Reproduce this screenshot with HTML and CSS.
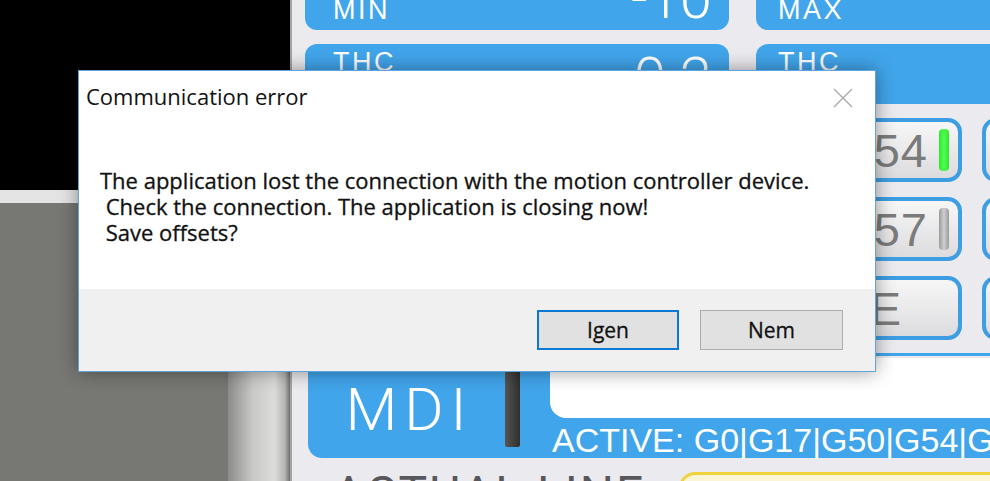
FILE: index.html
```html
<!doctype html>
<html>
  <head>
    <meta charset="utf-8">
    <title>Communication error</title>
    <link rel="stylesheet" href="styles.css">
  </head>
  <body>
    <div class="screen">
      <div class="left">
        <div class="video"></div>
        <div class="strip"></div>
        <div class="lower">
          <div class="grey"></div>
          <div class="slider"></div>
        </div>
      </div>
      <div class="panel">
        <div class="row first">
          <div class="box">
            <span class="label">MIN</span>
            <span class="value">-10</span>
          </div>
          <div class="box wide">
            <span class="label">MAX</span>
          </div>
        </div>
        <div class="row second">
          <div class="box top">
            <span class="label">THC</span>
            <span class="value">0.2</span>
          </div>
          <div class="box wide top">
            <span class="label">THC</span>
          </div>
        </div>
        <div class="keypad">
          <div class="key">G53</div>
          <div class="key">G54</div>
          <div class="key">G55</div>
          <div class="key">G56</div>
          <div class="key">G54<i class="led on"></i></div>
          <div class="key"></div>
          <div class="key">G57</div>
          <div class="key">G58</div>
          <div class="key">G59</div>
          <div class="key">G56</div>
          <div class="key">G57<i class="led"></i></div>
          <div class="key"></div>
          <div class="key">X</div>
          <div class="key">Y</div>
          <div class="key">Z</div>
          <div class="key">A</div>
          <div class="key plain">ONE</div>
          <div class="key"></div>
        </div>
        <div class="mdi">
          <div class="mdi-name">MDI</div>
          <div class="mdi-bar"></div>
          <div class="mdi-side">
            <div class="mdi-input"></div>
            <div class="mdi-active">ACTIVE: G0|G17|G50|G54|G64|G80|G90|G94</div>
          </div>
        </div>
        <div class="actual">
          <span class="actual-title">ACTUAL LINE</span>
          <div class="actual-box"></div>
        </div>
      </div>
    </div>

    <div class="dialog">
      <div class="dialog-head">
        <span class="dialog-title">Communication error</span>
        <svg class="close" width="20" height="20" viewBox="0 0 20 20">
          <path d="M1 1 L19 19 M19 1 L1 19" stroke="#a8a8a8" stroke-width="1.3" fill="none"/>
        </svg>
      </div>
      <div class="dialog-body">
        <p class="msg">The application lost the connection with the motion controller device.</p>
        <p class="msg"> Check the connection. The application is closing now!</p>
        <p class="msg"> Save offsets?</p>
      </div>
      <div class="dialog-foot">
        <button class="btn default">Igen</button>
        <button class="btn">Nem</button>
      </div>
    </div>
  </body>
</html>
```

FILE: styles.css
```css
body {
  margin: 0;
  width: 990px;
  height: 481px;
  overflow: hidden;
  background: #eaeaef;
}

.screen {
  display: flex;
  height: 481px;
}

/* left side: camera view + grey area */
.left {
  width: 290px;
  flex: none;
  display: flex;
  flex-direction: column;
}
.video { height: 190px; background: #000; }
.strip { height: 13px; background: #e4e4e4; }
.lower { flex: 1; display: flex; }
.grey { width: 228px; background: #777873; }
.slider {
  flex: 1;
  background: linear-gradient(to right, #8b8b89, #c9c9c7 40%, #dcdcda 75%, #b4b4b2 92%, #6e6e6e);
}

/* right side panel */
.panel {
  flex: 1;
  min-width: 0;
  overflow: hidden;
  padding-left: 13px;
  border-left: 2px solid #a3a3a6;
  font-family: Roboto, "Liberation Sans", sans-serif;
  font-weight: 300;
  color: #fff;
}

.row { display: flex; gap: 27px; }
.row.first { margin-top: -22px; height: 52px; }
.row.second { margin-top: 14px; height: 60px; }

.box {
  width: 424px;
  flex: none;
  background: #41a5eb;
  border-radius: 12px;
  display: flex;
  justify-content: space-between;
  align-items: flex-end;
  padding: 0 17px 0 28px;
  box-sizing: border-box;
}
.box.wide { width: 300px; border-radius: 12px 0 0 12px; padding-left: 22px; }
.box.top { align-items: flex-start; }

.label {
  font-family: "Liberation Sans", Arial, sans-serif;
  font-weight: 400;
  font-size: 27px;
  line-height: 1;
  padding-bottom: 6px;
  letter-spacing: 2.5px;
}
.box.top .label { padding: 5px 0 0; }
.value {
  font-size: 58px;
  line-height: 1;
  padding-bottom: 3px;
}
.box.top .value { padding: 5px 0 0; }

/* offsets keypad */
.keypad {
  display: grid;
  grid-template-columns: repeat(6, 112px);
  grid-auto-rows: 64px;
  gap: 15px 20px;
  padding: 14px 0 13px 17px;
  border-bottom: 3px solid #41a5eb;
  margin-right: -40px;
}
.key {
  border: 4px solid #3e9ee3;
  border-radius: 14px;
  background: linear-gradient(#f7f7f8, #dcdcde);
  display: flex;
  align-items: center;
  justify-content: flex-end;
  gap: 11px;
  padding-right: 9px;
  font-family: "Liberation Sans", Arial, sans-serif;
  font-size: 47px;
  font-weight: 400;
  color: #7b7b7b;
  letter-spacing: 1px;
  white-space: nowrap;
  overflow: hidden;
}
.key.plain { padding-right: 56px; }
.led {
  width: 10px;
  height: 42px;
  flex: none;
  border-radius: 4px;
  background: linear-gradient(to right, #9a9a9a, #cfcfcf, #9a9a9a);
}
.led.on { background: linear-gradient(to right, #2ee62e, #50ff50, #2ee62e); }

/* MDI line */
.mdi {
  margin: 2px -20px 0 3px;
  height: 100px;
  background: #41a5eb;
  border-radius: 14px;
  display: flex;
}
.mdi-name {
  width: 197px;
  flex: none;
  display: flex;
  align-items: center;
  justify-content: center;
  font-size: 60px;
  font-weight: 300;
  letter-spacing: 7px;
  padding: 2px 0 0 6px;
  box-sizing: border-box;
}
.mdi-bar {
  width: 15px;
  flex: none;
  margin: 8px 0 11px;
  border-radius: 2px;
  background: linear-gradient(to right, #555, #2f2f2f);
}
.mdi-side {
  flex: 1;
  min-width: 0;
  margin-left: 30px;
  display: flex;
  flex-direction: column;
}
.mdi-input {
  height: 60px;
  background: #fff;
  border-radius: 0 0 0 16px;
}
.mdi-active {
  font-family: "Liberation Sans", Arial, sans-serif;
  font-weight: 400;
  font-size: 34px;
  line-height: 1;
  white-space: nowrap;
  letter-spacing: 0;
  padding: 5px 0 0 2px;
}

/* actual line */
.actual {
  display: flex;
  align-items: flex-start;
  margin-top: 12px;
}
.actual-title {
  font-size: 48px;
  font-weight: 400;
  color: #58585c;
  line-height: 1;
  margin-left: 28px;
  letter-spacing: 2px;
  white-space: nowrap;
}
.actual-box {
  margin: 2px 0 0 34px;
  flex: 1;
  height: 40px;
  border: 3px solid #f0d23a;
  border-right: 0;
  border-radius: 16px 0 0 16px;
  background: #fbf5d6;
}

/* windows message box */
.dialog {
  position: absolute;
  left: 78px;
  top: 70px;
  width: 796px;
  height: 300px;
  border: 1px solid #62a3dc;
  background: #fff;
  box-shadow: 0 0 18px rgba(0, 0, 0, 0.4);
  font-family: "Open Sans", "Noto Sans", sans-serif;
  color: #111;
  display: flex;
  flex-direction: column;
}
.dialog-head {
  height: 50px;
  display: flex;
  align-items: center;
  justify-content: space-between;
  padding: 0 22px 0 7px;
}
.dialog-title { font-size: 22px; }
.close { margin-top: 4px; }
.dialog-body {
  flex: 1;
  padding: 46px 0 0 21px;
}
.msg {
  margin: 0;
  font-size: 22px;
  line-height: 26px;
  white-space: pre;
  -webkit-text-stroke: 0.3px #111;
}
.dialog-foot {
  height: 82px;
  background: #f0f0f0;
  display: flex;
  justify-content: flex-end;
  align-items: center;
  gap: 21px;
  padding-right: 32px;
  box-sizing: border-box;
}
.btn {
  width: 143px;
  height: 40px;
  border: 1px solid #adadad;
  background: #e1e1e1;
  font-family: "Open Sans", "Noto Sans", sans-serif;
  font-size: 21px;
  color: #111;
  -webkit-text-stroke: 0.3px #111;
}
.btn.default {
  border: 2px solid #0a78d4;
  width: 142px;
}
```
